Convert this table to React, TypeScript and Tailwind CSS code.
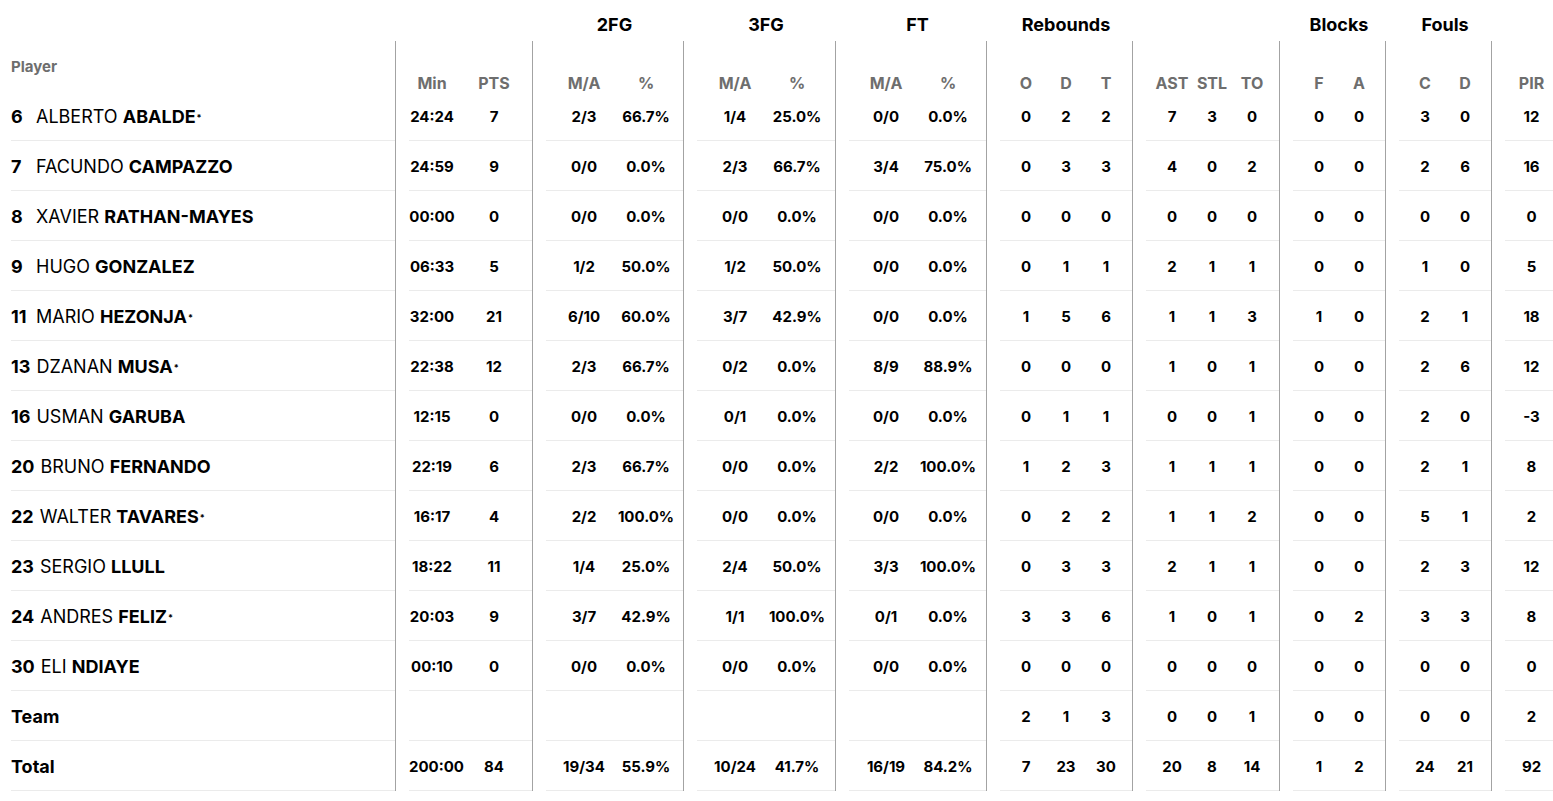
import React from 'react';

type Group = {
  title: string;
  width: string;
  pad: string;
  cols: { label: string; w: string }[];
};

const groups: Group[] = [
  { title: '', width: 'w-[137px]', pad: '', cols: [{ label: 'Min', w: 'w-[46px]' }, { label: 'PTS', w: 'w-[78px]' }] },
  { title: '2FG', width: 'w-[151px]', pad: 'pl-[7px]', cols: [{ label: 'M/A', w: 'w-[62px]' }, { label: '%', w: 'w-[62px]' }] },
  { title: '3FG', width: 'w-[152px]', pad: 'pl-[7px]', cols: [{ label: 'M/A', w: 'w-[62px]' }, { label: '%', w: 'w-[62px]' }] },
  { title: 'FT', width: 'w-[151px]', pad: 'pl-[6px]', cols: [{ label: 'M/A', w: 'w-[62px]' }, { label: '%', w: 'w-[62px]' }] },
  { title: 'Rebounds', width: 'w-[146px]', pad: 'pl-[6px]', cols: [{ label: 'O', w: 'w-[40px]' }, { label: 'D', w: 'w-[40px]' }, { label: 'T', w: 'w-[40px]' }] },
  { title: '', width: 'w-[147px]', pad: 'pl-[6px]', cols: [{ label: 'AST', w: 'w-[40px]' }, { label: 'STL', w: 'w-[40px]' }, { label: 'TO', w: 'w-[40px]' }] },
  { title: 'Blocks', width: 'w-[106px]', pad: 'pl-[6px]', cols: [{ label: 'F', w: 'w-[40px]' }, { label: 'A', w: 'w-[40px]' }] },
  { title: 'Fouls', width: 'w-[106px]', pad: 'pl-[6px]', cols: [{ label: 'C', w: 'w-[40px]' }, { label: 'D', w: 'w-[40px]' }] },
  { title: '', width: 'w-[62px]', pad: 'pl-[4px]', cols: [{ label: 'PIR', w: 'w-[45px]' }] },
];

type Player = {
  no: number;
  first: string;
  last: string;
  starter: boolean;
  stats: string[];
};

const players: Player[] = [
  { no: 6, first: 'ALBERTO', last: 'ABALDE', starter: true, stats: ['24:24', '7', '2/3', '66.7%', '1/4', '25.0%', '0/0', '0.0%', '0', '2', '2', '7', '3', '0', '0', '0', '3', '0', '12'] },
  { no: 7, first: 'FACUNDO', last: 'CAMPAZZO', starter: false, stats: ['24:59', '9', '0/0', '0.0%', '2/3', '66.7%', '3/4', '75.0%', '0', '3', '3', '4', '0', '2', '0', '0', '2', '6', '16'] },
  { no: 8, first: 'XAVIER', last: 'RATHAN-MAYES', starter: false, stats: ['00:00', '0', '0/0', '0.0%', '0/0', '0.0%', '0/0', '0.0%', '0', '0', '0', '0', '0', '0', '0', '0', '0', '0', '0'] },
  { no: 9, first: 'HUGO', last: 'GONZALEZ', starter: false, stats: ['06:33', '5', '1/2', '50.0%', '1/2', '50.0%', '0/0', '0.0%', '0', '1', '1', '2', '1', '1', '0', '0', '1', '0', '5'] },
  { no: 11, first: 'MARIO', last: 'HEZONJA', starter: true, stats: ['32:00', '21', '6/10', '60.0%', '3/7', '42.9%', '0/0', '0.0%', '1', '5', '6', '1', '1', '3', '1', '0', '2', '1', '18'] },
  { no: 13, first: 'DZANAN', last: 'MUSA', starter: true, stats: ['22:38', '12', '2/3', '66.7%', '0/2', '0.0%', '8/9', '88.9%', '0', '0', '0', '1', '0', '1', '0', '0', '2', '6', '12'] },
  { no: 16, first: 'USMAN', last: 'GARUBA', starter: false, stats: ['12:15', '0', '0/0', '0.0%', '0/1', '0.0%', '0/0', '0.0%', '0', '1', '1', '0', '0', '1', '0', '0', '2', '0', '-3'] },
  { no: 20, first: 'BRUNO', last: 'FERNANDO', starter: false, stats: ['22:19', '6', '2/3', '66.7%', '0/0', '0.0%', '2/2', '100.0%', '1', '2', '3', '1', '1', '1', '0', '0', '2', '1', '8'] },
  { no: 22, first: 'WALTER', last: 'TAVARES', starter: true, stats: ['16:17', '4', '2/2', '100.0%', '0/0', '0.0%', '0/0', '0.0%', '0', '2', '2', '1', '1', '2', '0', '0', '5', '1', '2'] },
  { no: 23, first: 'SERGIO', last: 'LLULL', starter: false, stats: ['18:22', '11', '1/4', '25.0%', '2/4', '50.0%', '3/3', '100.0%', '0', '3', '3', '2', '1', '1', '0', '0', '2', '3', '12'] },
  { no: 24, first: 'ANDRES', last: 'FELIZ', starter: true, stats: ['20:03', '9', '3/7', '42.9%', '1/1', '100.0%', '0/1', '0.0%', '3', '3', '6', '1', '0', '1', '0', '2', '3', '3', '8'] },
  { no: 30, first: 'ELI', last: 'NDIAYE', starter: false, stats: ['00:10', '0', '0/0', '0.0%', '0/0', '0.0%', '0/0', '0.0%', '0', '0', '0', '0', '0', '0', '0', '0', '0', '0', '0'] },
];

const teamStats = ['', '', '', '', '', '', '', '', '2', '1', '3', '0', '0', '1', '0', '0', '0', '0', '2'];
const totalStats = ['200:00', '84', '19/34', '55.9%', '10/24', '41.7%', '16/19', '84.2%', '7', '23', '30', '20', '8', '14', '1', '2', '24', '21', '92'];

// split the flat stat list into the column groups
const splitStats = (stats: string[]) => {
  let i = 0;
  return groups.map((g) => g.cols.map(() => stats[i++]));
};

const StatRow = ({ label, stats }: { label: React.ReactNode; stats: string[] }) => {
  const parts = splitStats(stats);
  return (
    <div className="flex h-[50px]">
      <div className="w-[395px] shrink-0 pl-[11px]">
        <div className="h-full border-b border-[#ebebeb] flex items-center pt-[3px] text-[18px] leading-[22px] text-black">{label}</div>
      </div>
      {groups.map((g, gi) => (
        <div key={gi} className={`${g.width} shrink-0 border-l border-[#a3a3a3] pl-[13px]`}>
          <div className={`h-full border-b border-[#ebebeb] flex items-center pt-[3px] ${g.pad}`}>
            {g.cols.map((c, ci) => (
              <div key={ci} className={`${c.w} shrink-0 text-center text-[15px] leading-[20px] font-bold text-black`}>
                {parts[gi][ci]}
              </div>
            ))}
          </div>
        </div>
      ))}
    </div>
  );
};

export default function App() {
  return (
    <div className="w-[1553px] h-[801px] bg-white overflow-hidden" style={{ fontFamily: 'Inter, "Noto Sans", sans-serif' }}>
      {/* group titles */}
      <div className="flex h-[41px]">
        <div className="w-[395px] shrink-0" />
        {groups.map((g, gi) => (
          <div key={gi} className={`${g.width} shrink-0 pl-[14px]`}>
            <div className="h-full flex items-end justify-center pb-[5px] text-[18px] leading-[22px] font-bold text-black">{g.title}</div>
          </div>
        ))}
      </div>

      {/* column headers */}
      <div className="flex h-[50px]">
        <div className="w-[395px] shrink-0 pl-[11px] flex items-center pt-[2px] text-[15px] font-bold text-[#6e6e6e]">Player</div>
        {groups.map((g, gi) => (
          <div key={gi} className={`${g.width} shrink-0 border-l border-[#a3a3a3] pl-[13px]`}>
            <div className={`h-full flex items-end ${g.pad}`}>
              {g.cols.map((c, ci) => (
                <div key={ci} className={`${c.w} shrink-0 text-center text-[16px] leading-[16px] font-bold text-[#6e6e6e]`}>
                  {c.label}
                </div>
              ))}
            </div>
          </div>
        ))}
      </div>

      {players.map((p) => (
        <StatRow
          key={p.no}
          stats={p.stats}
          label={
            <>
              <span className="min-w-[19px] mr-[6px] font-bold">{p.no}</span>
              <span>{p.first}&nbsp;</span>
              <span className="font-bold">{p.last}</span>
              {p.starter && <span className="text-[9px] leading-[9px] font-bold ml-[1px]">*</span>}
            </>
          }
        />
      ))}
      <StatRow label={<span className="font-bold">Team</span>} stats={teamStats} />
      <StatRow label={<span className="font-bold">Total</span>} stats={totalStats} />
    </div>
  );
}
